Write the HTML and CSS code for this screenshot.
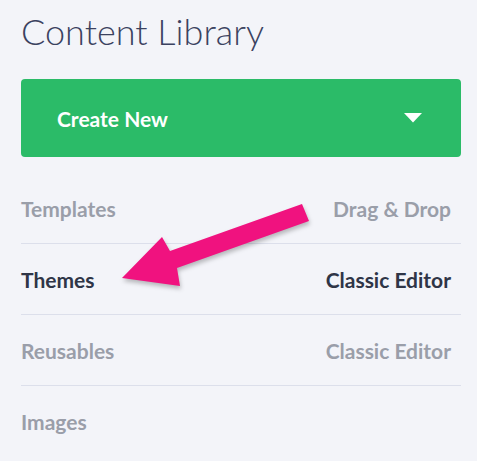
FILE: index.html
```html
<!DOCTYPE html>
<html>
<head>
<meta charset="utf-8">
<link rel="stylesheet" href="styles.css">
</head>
<body>
<div class="panel">
  <h1 class="title">Content Library</h1>
  <button class="create">
    <span>Create New</span>
    <svg class="caret" width="18" height="10" viewBox="0 0 18 10"><path d="M0 0H18L9 9.5Z" fill="#fff"/></svg>
  </button>
  <ul class="list">
    <li class="row muted"><span>Templates</span><span>Drag &amp; Drop</span></li>
    <li class="row active"><span>Themes</span><span>Classic Editor</span></li>
    <li class="row muted"><span>Reusables</span><span>Classic Editor</span></li>
    <li class="row muted last"><span>Images</span><span></span></li>
  </ul>
  <svg class="arrow" width="477" height="461" viewBox="0 0 477 461">
    <polygon points="122,278 162,237 170,251 302,204 309,221 177,268 180,286" fill="#f0127f"/>
  </svg>
</div>
</body>
</html>
```
FILE: styles.css
```css
html, body {
  margin: 0;
  padding: 0;
  background: #f3f4f9;
}
.panel {
  position: relative;
  width: 477px;
  height: 461px;
  padding: 0 16px 0 21px;
  box-sizing: border-box;
  font-family: Lato, "Noto Sans", sans-serif;
}
.title {
  margin: 0;
  padding-top: 10px;
  font-weight: 300;
  font-size: 36px;
  line-height: 43px;
  color: #3b4260;
  letter-spacing: 0;
}
.create {
  margin-top: 26px;
  width: 440px;
  height: 78px;
  border: none;
  border-radius: 4px;
  background: #2bbb68;
  color: #fff;
  font-family: Lato, "Noto Sans", sans-serif;
  font-weight: 700;
  font-size: 21px;
  display: flex;
  align-items: center;
  justify-content: space-between;
  padding: 0 39px 0 36px;
  box-sizing: border-box;
}
.caret {
  display: block;
}
.list {
  list-style: none;
  margin: 16px 0 0 0;
  padding: 0;
  width: 440px;
}
.row {
  height: 71px;
  display: flex;
  align-items: center;
  justify-content: space-between;
  padding-right: 10px;
  border-bottom: 1px solid #dcdfeb;
  box-sizing: border-box;
  font-size: 21px;
  font-weight: 700;
}
.row.last {
  border-bottom: none;
}
.muted {
  color: #9a9ea9;
}
.active {
  color: #2f3547;
}
.arrow {
  position: absolute;
  left: 0;
  top: 0;
  pointer-events: none;
  filter: drop-shadow(1px 3px 2px rgba(0,0,0,0.25));
}
```
